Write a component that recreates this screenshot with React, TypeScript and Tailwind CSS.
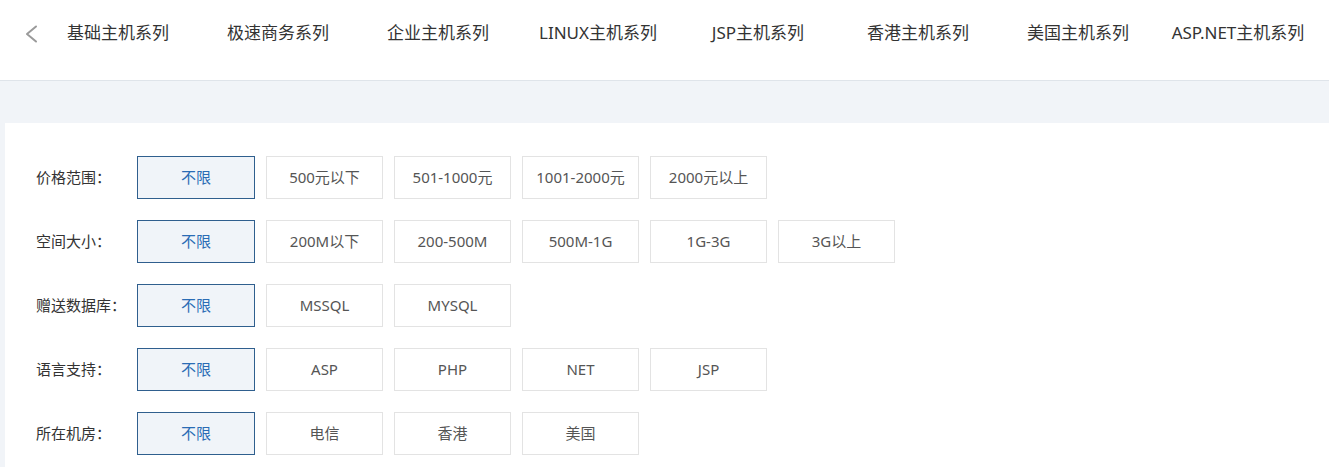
const navItems = [
    '基础主机系列',
    '极速商务系列',
    '企业主机系列',
    'LINUX主机系列',
    'JSP主机系列',
    '香港主机系列',
    '美国主机系列',
    'ASP.NET主机系列',
];

const filters = [
    { label: '价格范围', options: ['500元以下', '501-1000元', '1001-2000元', '2000元以上'] },
    { label: '空间大小', options: ['200M以下', '200-500M', '500M-1G', '1G-3G', '3G以上'] },
    { label: '赠送数据库', options: ['MSSQL', 'MYSQL'] },
    { label: '语言支持', options: ['ASP', 'PHP', 'NET', 'JSP'] },
    { label: '所在机房', options: ['电信', '香港', '美国'] },
];

export default function App() {
    return (
        <div className="w-[1329px] h-[467px] overflow-hidden bg-[#f1f4f8] font-['Noto_Sans','Noto_Sans_CJK_SC',sans-serif]">
            {/* Series nav */}
            <nav className="h-[81px] bg-white border-b border-[#dfe4ea] flex items-start pt-[20px] pl-[24px]">
                <svg width="14" height="18" viewBox="0 0 14 18" className="mt-[5px]">
                    <path d="M12 1.5 L3 9 L12 16.5" fill="none" stroke="#9a9a9a" strokeWidth="2" strokeLinecap="round" strokeLinejoin="round" />
                </svg>
                <div className="flex -ml-[0px]">
                    {navItems.map((item) => (
                        <span key={item} className="w-[160px] text-center text-[17px] leading-[26px] text-[#333]">
                            {item}
                        </span>
                    ))}
                </div>
            </nav>

            {/* Filter panel */}
            <div className="mt-[42px] ml-[5px] bg-white pt-[33px] pl-[31px] h-[400px] flex flex-col gap-[21px]">
                {filters.map((f) => (
                    <div key={f.label} className="flex items-center">
                        <span className="w-[101px] text-[15px] text-[#333]">{f.label}：</span>
                        <div className="flex gap-[11px]">
                            <button className="w-[118px] h-[43px] border border-[#2f5f8e] bg-[#f0f4f9] text-[15px] text-[#2a6cb5]">
                                不限
                            </button>
                            {f.options.map((o) => (
                                <button key={o} className="w-[117px] h-[43px] border border-[#e3e3e3] bg-white text-[15px] text-[#555]">
                                    {o}
                                </button>
                            ))}
                        </div>
                    </div>
                ))}
            </div>
        </div>
    );
}
